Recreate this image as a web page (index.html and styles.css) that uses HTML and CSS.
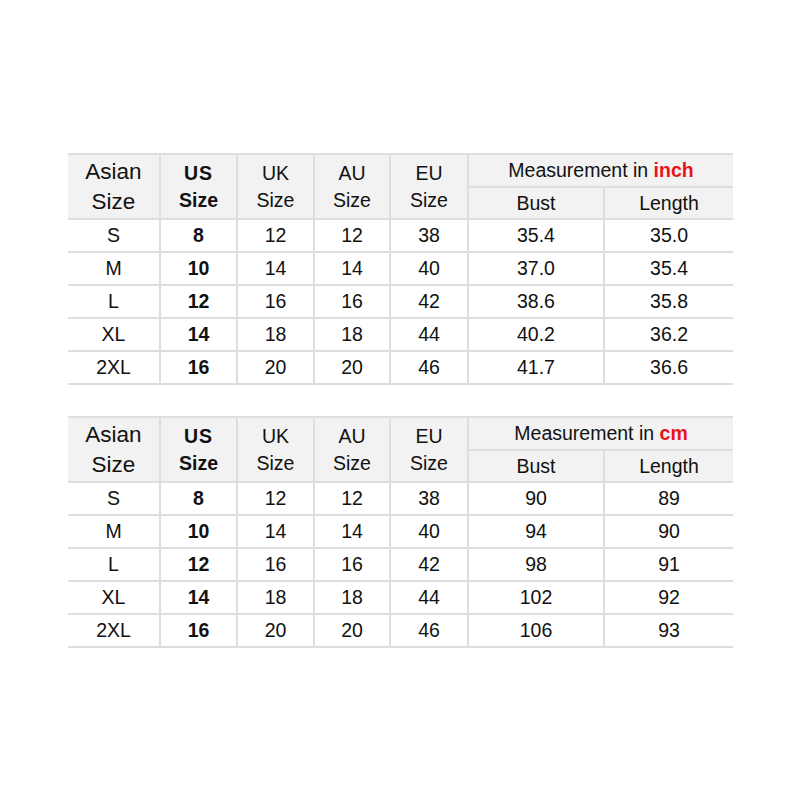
FILE: index.html
```html
<!DOCTYPE html>
<html>
<head>
<meta charset="utf-8">
<link rel="stylesheet" href="styles.css">
</head>
<body>
<div class="page">
  <table class="chart">
    <colgroup>
      <col class="c1"><col class="c2"><col class="c3"><col class="c4"><col class="c5"><col class="c6"><col class="c7">
    </colgroup>
    <thead>
      <tr class="h1">
        <th rowspan="2" class="asian">Asian<br>Size</th>
        <th rowspan="2" class="us"><span class="us-l">US</span><br>Size</th>
        <th rowspan="2" class="std">UK<br>Size</th>
        <th rowspan="2" class="std">AU<br>Size</th>
        <th rowspan="2" class="std">EU<br>Size</th>
        <th colspan="2" class="meas">Measurement in <b class="red">inch</b></th>
      </tr>
      <tr class="h2">
        <th class="sub">Bust</th>
        <th class="sub">Length</th>
      </tr>
    </thead>
    <tbody>
      <tr><td>S</td><td class="bold">8</td><td>12</td><td>12</td><td>38</td><td>35.4</td><td>35.0</td></tr>
      <tr><td>M</td><td class="bold">10</td><td>14</td><td>14</td><td>40</td><td>37.0</td><td>35.4</td></tr>
      <tr><td>L</td><td class="bold">12</td><td>16</td><td>16</td><td>42</td><td>38.6</td><td>35.8</td></tr>
      <tr><td>XL</td><td class="bold">14</td><td>18</td><td>18</td><td>44</td><td>40.2</td><td>36.2</td></tr>
      <tr><td>2XL</td><td class="bold">16</td><td>20</td><td>20</td><td>46</td><td>41.7</td><td>36.6</td></tr>
    </tbody>
  </table>

  <table class="chart">
    <colgroup>
      <col class="c1"><col class="c2"><col class="c3"><col class="c4"><col class="c5"><col class="c6"><col class="c7">
    </colgroup>
    <thead>
      <tr class="h1">
        <th rowspan="2" class="asian">Asian<br>Size</th>
        <th rowspan="2" class="us"><span class="us-l">US</span><br>Size</th>
        <th rowspan="2" class="std">UK<br>Size</th>
        <th rowspan="2" class="std">AU<br>Size</th>
        <th rowspan="2" class="std">EU<br>Size</th>
        <th colspan="2" class="meas">Measurement in <b class="red">cm</b></th>
      </tr>
      <tr class="h2">
        <th class="sub">Bust</th>
        <th class="sub">Length</th>
      </tr>
    </thead>
    <tbody>
      <tr><td>S</td><td class="bold">8</td><td>12</td><td>12</td><td>38</td><td>90</td><td>89</td></tr>
      <tr><td>M</td><td class="bold">10</td><td>14</td><td>14</td><td>40</td><td>94</td><td>90</td></tr>
      <tr><td>L</td><td class="bold">12</td><td>16</td><td>16</td><td>42</td><td>98</td><td>91</td></tr>
      <tr><td>XL</td><td class="bold">14</td><td>18</td><td>18</td><td>44</td><td>102</td><td>92</td></tr>
      <tr><td>2XL</td><td class="bold">16</td><td>20</td><td>20</td><td>46</td><td>106</td><td>93</td></tr>
    </tbody>
  </table>
</div>
</body>
</html>
```

FILE: styles.css
```css
html, body {
  margin: 0;
  padding: 0;
  background: #ffffff;
}

.page {
  padding: 153px 0 0 68px;
  display: flex;
  flex-direction: column;
  gap: 31px;
  font-family: "Liberation Sans", Arial, sans-serif;
  color: #111111;
}

.chart {
  border-collapse: collapse;
  table-layout: fixed;
  width: 665px;
}

.c1 { width: 92px; }
.c2 { width: 77px; }
.c3 { width: 77px; }
.c4 { width: 76px; }
.c5 { width: 78px; }
.c6 { width: 136px; }
.c7 { width: 129px; }

.chart th,
.chart td {
  border: 2px solid #dedede;
  padding: 0;
  text-align: center;
  vertical-align: middle;
  font-weight: normal;
  font-size: 19.5px;
}

.chart tr > :first-child { border-left: none; }
.chart tr > :last-child { border-right: none; }

.chart thead th {
  background: #f2f2f2;
}

.chart .h1 th.meas {
  height: 31px;
  line-height: 31px;
}

.chart .h2 th {
  height: 30px;
  line-height: 30px;
}

.chart th.asian {
  font-size: 22.5px;
  line-height: 30px;
}

.chart th.std {
  line-height: 27px;
}

.chart th.us {
  font-weight: bold;
  line-height: 27px;
}

.us-l {
  letter-spacing: 1px;
}

.chart td {
  height: 31px;
  line-height: 31px;
}

.chart td.bold {
  font-weight: bold;
}

.red {
  color: #e8141c;
  font-weight: bold;
}
```
